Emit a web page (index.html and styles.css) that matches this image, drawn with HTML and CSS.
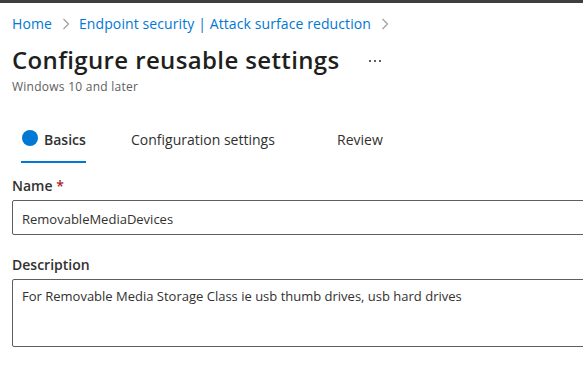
FILE: index.html
```html
<!DOCTYPE html>
<html lang="en">
<head>
<meta charset="utf-8">
<title>Configure reusable settings</title>
<link rel="stylesheet" href="styles.css">
</head>
<body>
<div class="topbar"></div>
<main class="page">
  <nav class="breadcrumb">
    <a class="crumb" href="#">Home</a>
    <span class="chev"><svg width="8" height="12" viewBox="0 0 8 12"><path d="M1.5 1 L6.5 6 L1.5 11" fill="none" stroke="#a19f9d" stroke-width="1.2"/></svg></span>
    <a class="crumb" href="#">Endpoint security | Attack surface reduction</a>
    <span class="chev"><svg width="8" height="12" viewBox="0 0 8 12"><path d="M1.5 1 L6.5 6 L1.5 11" fill="none" stroke="#a19f9d" stroke-width="1.2"/></svg></span>
  </nav>
  <div class="title-row">
    <h1 class="title">Configure reusable settings</h1>
    <span class="more"><i></i><i></i><i></i></span>
  </div>
  <div class="subtitle">Windows 10 and later</div>

  <div class="tabs">
    <div class="tab tab-active"><span class="tab-inner"><span class="dot"></span>Basics</span></div>
    <div class="tab"><span class="tab-inner">Configuration settings</span></div>
    <div class="tab"><span class="tab-inner">Review</span></div>
  </div>

  <div class="field">
    <label class="label">Name <span class="req">*</span></label>
    <div class="input">RemovableMediaDevices</div>
  </div>
  <div class="field field-desc">
    <label class="label">Description</label>
    <div class="input textarea">For Removable Media Storage Class ie usb thumb drives, usb hard drives</div>
  </div>
</main>
</body>
</html>
```

FILE: styles.css
```css
html, body {
  margin: 0;
  padding: 0;
  background: #ffffff;
  overflow: hidden;
}
body {
  font-family: "Open Sans", "Noto Sans", sans-serif;
  color: #323130;
  font-size: 14px;
}
.topbar {
  height: 3px;
  background: #3f3f3f;
}
.page {
  padding: 11px 0 0 12px;
}
.breadcrumb {
  display: flex;
  align-items: center;
  height: 20px;
  line-height: 20px;
  font-size: 14px;
}
.crumb {
  color: #0078d4;
  text-decoration: none;
  letter-spacing: 0.1px;
}
.chev {
  display: inline-flex;
  align-items: center;
  margin: 0 9px 0 10px;
}
.title-row {
  display: flex;
  align-items: center;
  margin-top: 10px;
  height: 32px;
}
.title {
  margin: 0;
  font-size: 24px;
  font-weight: 600;
  line-height: 32px;
  letter-spacing: 0.37px;
  color: #201f1e;
}
.more {
  display: inline-flex;
  gap: 3px;
  margin-left: 29px;
  margin-top: 2px;
}
.more i {
  width: 2px;
  height: 2px;
  background: #605e5c;
  display: block;
}
.subtitle {
  font-size: 12px;
  line-height: 16px;
  color: #605e5c;
  margin-top: 3px;
  letter-spacing: 0.25px;
}
.tabs {
  display: grid;
  grid-template-columns: 110px 206px auto;
  margin-top: 35px;
  padding-left: 9px;
}
.tab-inner {
  display: inline-flex;
  align-items: center;
  height: 20px;
  line-height: 20px;
  padding-bottom: 11px;
  border-bottom: 2px solid transparent;
  color: #323130;
}
.tab-active .tab-inner {
  border-bottom-color: #0078d4;
  font-weight: 600;
}
.dot {
  width: 16px;
  height: 16px;
  border-radius: 50%;
  background: #0078d4;
  margin-right: 6px;
  margin-left: 1px;
  margin-top: -4px;
}
.field {
  margin-top: 13px;
}
.field-desc {
  margin-top: 20px;
}
.label {
  display: block;
  font-weight: 600;
  line-height: 20px;
  margin-bottom: 4px;
}
.req {
  color: #a4262c;
}
.input {
  box-sizing: border-box;
  width: 620px;
  height: 35px;
  border: 1px solid #605e5c;
  border-radius: 2px;
  padding: 8px 9px 0;
  line-height: 20px;
  font-size: 13px;
  color: #323130;
}
.textarea {
  height: 68px;
  padding-top: 6px;
}
```
